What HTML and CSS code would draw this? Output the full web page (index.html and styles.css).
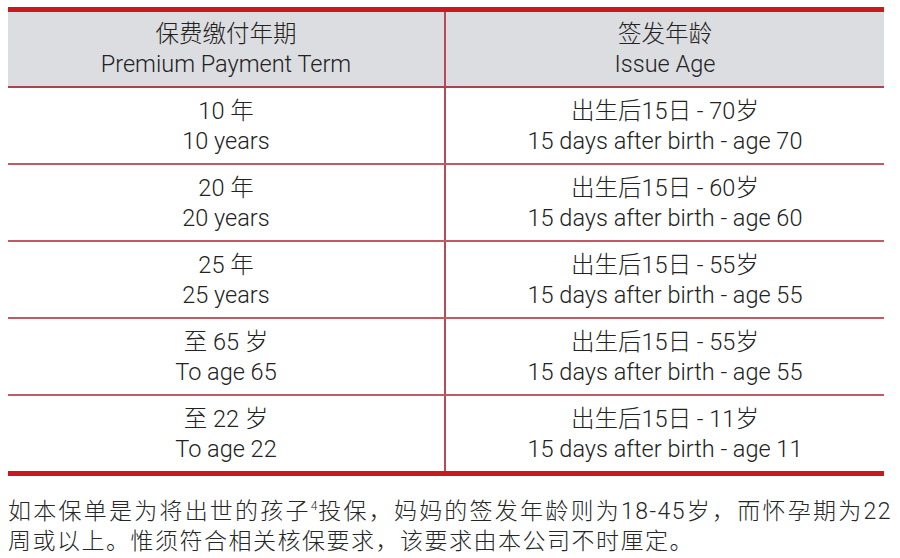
FILE: index.html
```html
<!DOCTYPE html>
<html lang="zh">
<head>
<meta charset="utf-8">
<link rel="stylesheet" href="styles.css">
</head>
<body>
<div class="page">
  <div class="table">
    <div class="row head">
      <div class="cell"><span class="zh">保费缴付年期</span><span>Premium Payment Term</span></div>
      <div class="cell"><span class="zh">签发年龄</span><span>Issue Age</span></div>
    </div>
    <div class="row">
      <div class="cell"><span>10 年</span><span>10 years</span></div>
      <div class="cell"><span>出生后15日 - 70岁</span><span>15 days after birth - age 70</span></div>
    </div>
    <div class="row">
      <div class="cell"><span>20 年</span><span>20 years</span></div>
      <div class="cell"><span>出生后15日 - 60岁</span><span>15 days after birth - age 60</span></div>
    </div>
    <div class="row">
      <div class="cell"><span>25 年</span><span>25 years</span></div>
      <div class="cell"><span>出生后15日 - 55岁</span><span>15 days after birth - age 55</span></div>
    </div>
    <div class="row">
      <div class="cell"><span>至 65 岁</span><span>To age 65</span></div>
      <div class="cell"><span>出生后15日 - 55岁</span><span>15 days after birth - age 55</span></div>
    </div>
    <div class="row last">
      <div class="cell"><span>至 22 岁</span><span>To age 22</span></div>
      <div class="cell"><span>出生后15日 - 11岁</span><span>15 days after birth - age 11</span></div>
    </div>
  </div>
  <p class="note"><span class="l1">如本保单是为将出世的孩子<sup>4</sup>投保，妈妈的签发年龄则为18-45岁，而怀孕期为22</span><span class="l2">周或以上。惟须符合相关核保要求，该要求由本公司不时厘定。</span></p>
</div>
</body>
</html>
```

FILE: styles.css
```css
html, body {
  margin: 0;
  padding: 0;
  background: #ffffff;
}
.page {
  padding: 7px 8px 0 8px;
  font-family: "Roboto", "Liberation Sans", "Noto Sans CJK SC", sans-serif;
  color: #222222;
}
.table {
  width: 876px;
  border-top: 5px solid #c9181e;
  border-bottom: 5px solid #c9181e;
}
.row {
  display: grid;
  grid-template-columns: 438px 1fr;
  height: 75px;
  border-bottom: 2px solid #c25a66;
}
.row.head {
  height: 74px;
  background: #dcdde0;
  border-bottom: 2px solid #a8444e;
}
.row.last {
  height: 75px;
  border-bottom: none;
}
.cell {
  display: flex;
  flex-direction: column;
  align-items: center;
  justify-content: center;
  font-size: 23.5px;
  line-height: 30px;
  font-weight: 300;
}
.cell:first-child {
  border-right: 2px solid #b84a56;
}
.cell span {
  display: block;
  white-space: nowrap;
}
.note {
  margin: 21px 0 0 0;
  font-size: 23px;
  line-height: 30px;
  letter-spacing: 1.5px;
  color: #262626;
  font-weight: 300;
}
.note .l1 {
  display: block;
  text-align: justify;
  text-align-last: justify;
}
.note .l2 {
  display: block;
}
.note sup {
  font-size: 12px;
  line-height: 0;
  vertical-align: 9px;
  letter-spacing: 0;
}
```
